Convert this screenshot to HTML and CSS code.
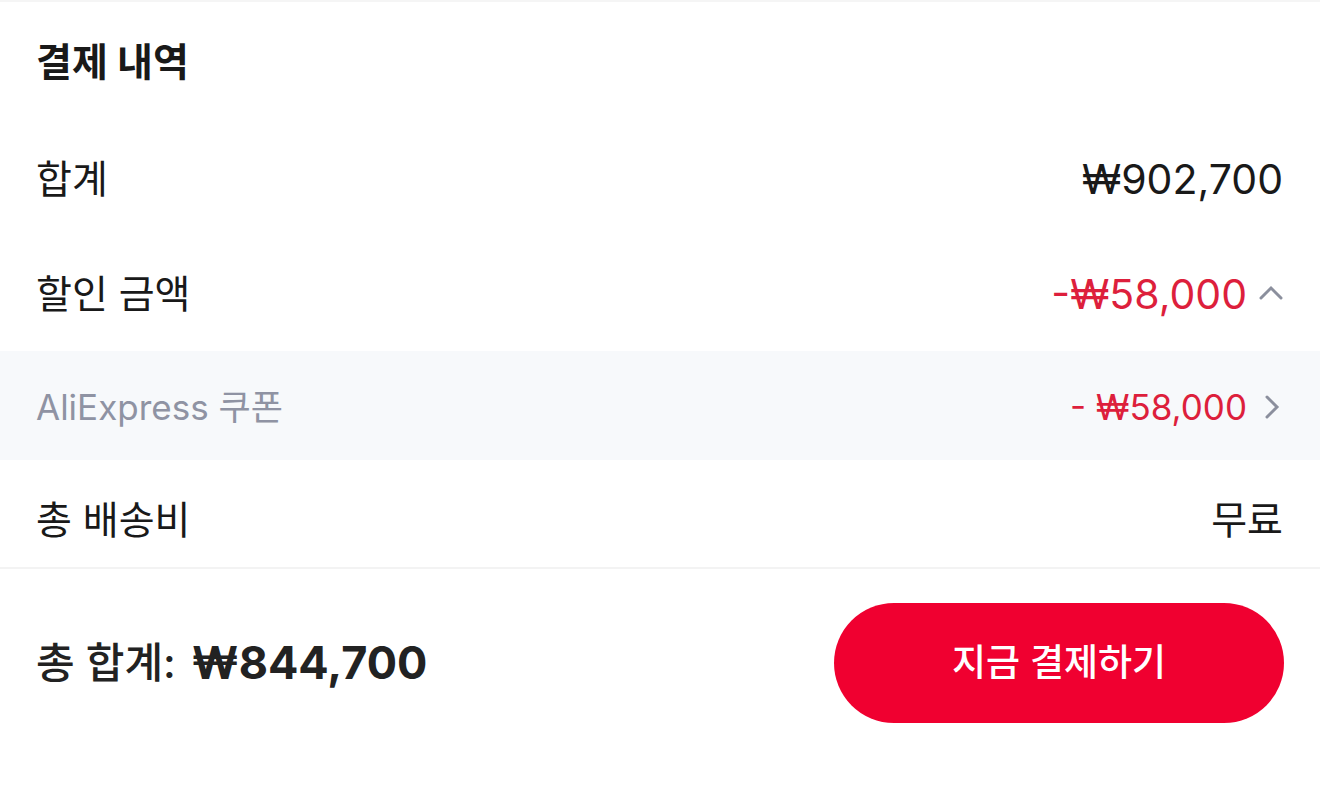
FILE: index.html
```html
<!DOCTYPE html>
<html lang="ko">
<head>
  <meta charset="UTF-8">
  <meta name="viewport" content="width=device-width, initial-scale=1">
  <title>결제 내역</title>
  <link rel="stylesheet" href="styles.css">
</head>
<body>

<main class="summary">
  <h1>결제 내역</h1>
  <div class="row">
    <span>합계</span>
    <span class="amount">₩902,700</span>
  </div>
  <div class="row">
    <span>할인 금액</span>
    <button type="button" class="toggle discount" aria-expanded="true" aria-controls="coupons">
      <span class="amount">-₩58,000</span>
      <svg class="icon" viewBox="0 0 24 24" aria-hidden="true"><path d="M2 16 L12 6 L22 16"/></svg>
    </button>
  </div>
  <a href="#" id="coupons" class="coupon">
    <span>AliExpress 쿠폰</span>
    <span class="coupon-value discount">
      <span>- ₩58,000</span>
      <svg class="icon" viewBox="0 0 24 24" aria-hidden="true"><path d="M8 2 L18 12 L8 22"/></svg>
    </span>
  </a>
  <div class="row shipping">
    <span>총 배송비</span>
    <span>무료</span>
  </div>
</main>

<footer class="checkout">
  <div class="total">
    <span>총 합계:</span>
    <span class="total-amount">₩844,700</span>
  </div>
  <button type="button" class="pay-button">지금 결제하기</button>
</footer>

</body>
</html>
```
FILE: styles.css
```css
* { box-sizing: border-box; }
body { margin: 0; background: #fff; color: #191919; font-family: Inter, "Noto Sans CJK KR", sans-serif; font-size: 39px; line-height: 60px; }
button { font: inherit; border: 0; cursor: pointer; }
.summary { border-top: 2px solid #f5f5f5; }
h1 { margin: 0; padding: 30px 36px 29px; font-size: 39px; line-height: 60px; font-weight: 700; }
.row { display: flex; justify-content: space-between; align-items: center; height: 115px; padding: 0 37px 0 36px; }
.amount { font-size: 41px; }
.discount { color: #dd1f3c; }
.toggle { display: flex; align-items: center; gap: 12px; padding: 0; background: none; }
.icon { width: 24px; height: 24px; fill: none; stroke: #8b8f9d; stroke-width: 3; stroke-linecap: round; }
.coupon { display: flex; justify-content: space-between; align-items: center; height: 109px; padding: 2px 37px 0 36px; background: #f7f9fb; color: #8f93a3; font-size: 35px; text-decoration: none; }
.coupon-value { display: flex; align-items: center; gap: 12px; }
.shipping { height: 107px; padding-top: 12px; }
.checkout { display: flex; justify-content: space-between; align-items: center; padding: 34px 36px 75px; border-top: 2px solid #f3f3f3; }
.total { display: flex; flex-wrap: wrap; align-items: center; column-gap: 16px; font-size: 42px; font-weight: 500; color: #222; }
.total-amount { font-size: 45px; font-weight: 700; }
.pay-button { width: 450px; height: 120px; border-radius: 60px; background: #f00030; color: #fff; font-size: 37px; font-weight: 500; }
```
